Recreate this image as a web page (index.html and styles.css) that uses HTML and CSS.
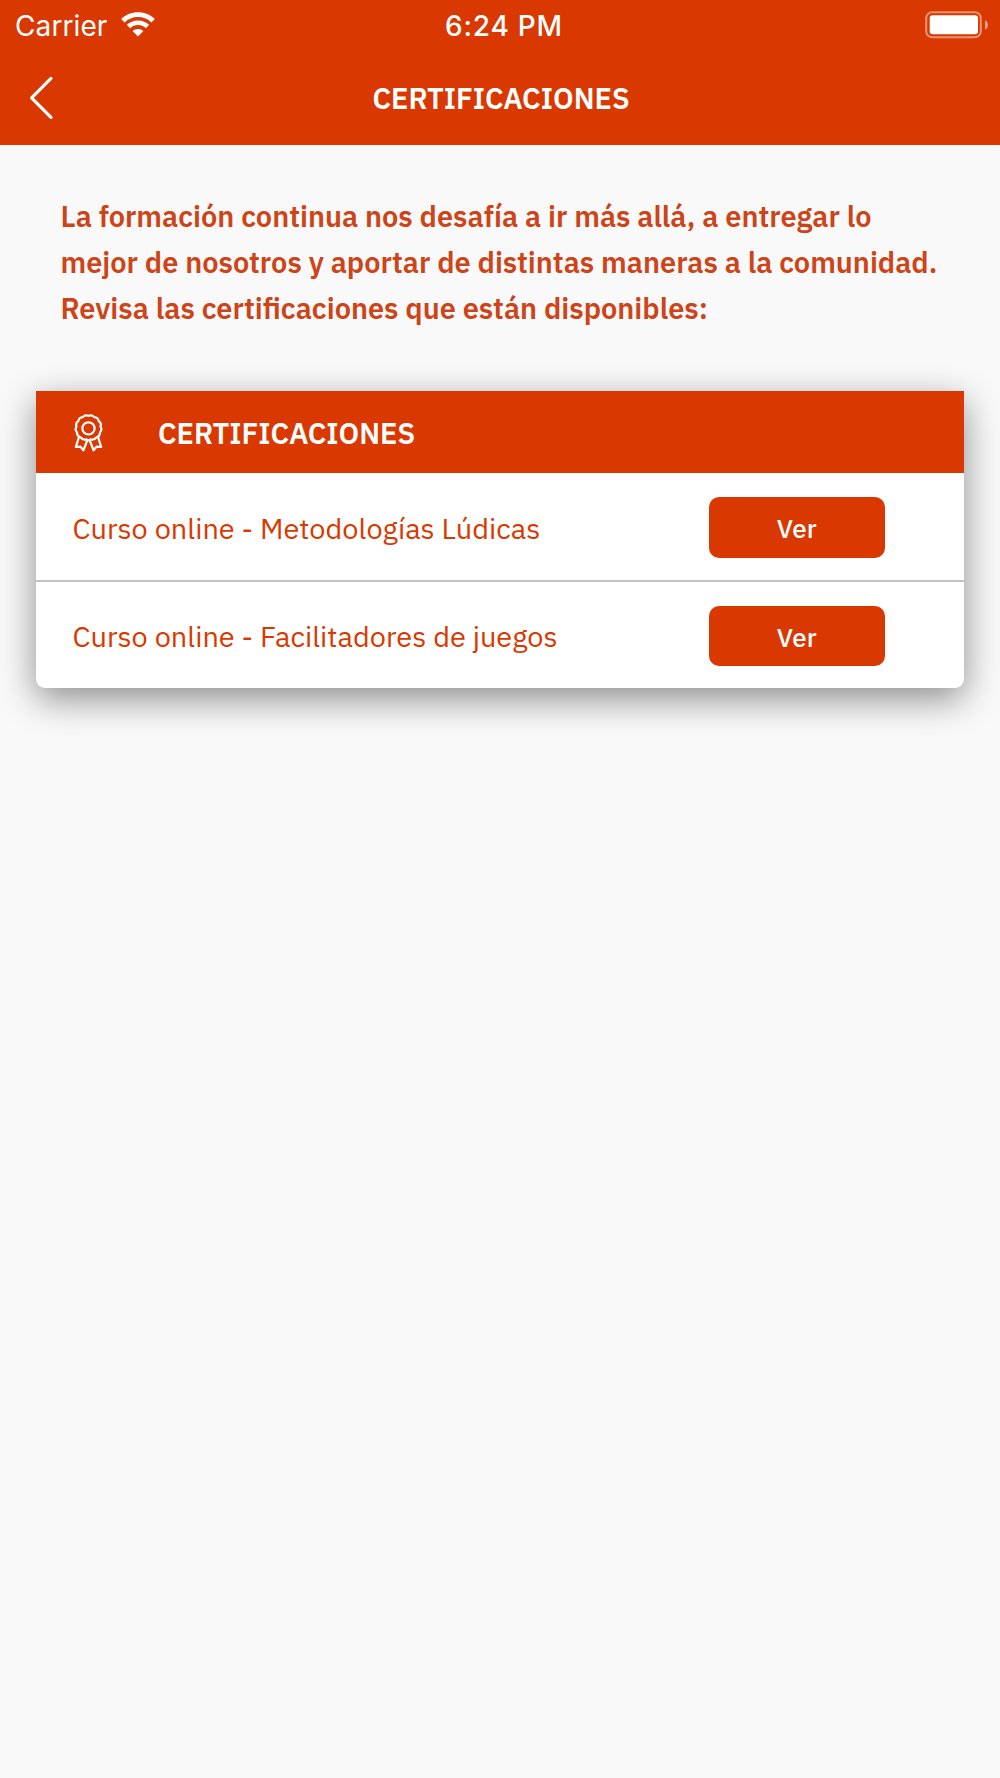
FILE: index.html
```html
<!DOCTYPE html>
<html lang="es">
  <head>
    <meta charset="UTF-8" />
    <meta name="viewport" content="width=device-width, initial-scale=1.0" />
    <title>Certificaciones</title>
    <link rel="stylesheet" href="styles.css">
  </head>
  <body>
    <header class="header">
      <div class="status-bar">
        <div class="carrier">
          <span>Carrier</span>
          <svg class="wifi" width="34" height="25" viewBox="0 0 34 25" fill="#fff">
            <path d="M17 0.3C23.7 0.3 29.6 2.8 33.8 7L30.4 10.5C26.9 7.1 22.3 5.1 17 5.1S7.1 7.1 3.6 10.5L0.2 7C4.4 2.8 10.3 0.3 17 0.3Z" />
            <path d="M17 8.4C21.4 8.4 25.3 10 28.2 12.8L24.8 16.2C22.7 14.2 20 13.1 17 13.1S11.3 14.2 9.2 16.2L5.8 12.8C8.7 10 12.6 8.4 17 8.4Z" />
            <path d="M17 17C19 17 20.9 17.7 22.4 19L17 24.4L11.6 19C13.1 17.7 15 17 17 17Z" />
          </svg>
        </div>
        <span class="time">6:24 PM</span>
        <svg class="battery" width="64" height="28" viewBox="0 0 64 28">
          <rect x="1.2" y="1.2" width="54.6" height="25" rx="6" fill="none" stroke="#fff" stroke-opacity="0.45" stroke-width="2" />
          <rect x="4.7" y="4.2" width="48.3" height="19" rx="3" fill="#fff" />
          <path d="M60 9.3C61.8 10 62.9 11.7 62.9 13.9S61.8 17.8 60 18.5Z" fill="#fff" fill-opacity="0.55" />
        </svg>
      </div>
      <div class="nav-bar">
        <svg class="back" width="26" height="46" viewBox="0 0 26 46">
          <path d="M23 3.4L3.6 22.8L23 42.4" fill="none" stroke="#fff" stroke-width="3.2" stroke-linecap="round" stroke-linejoin="round" />
        </svg>
        <h1 class="title">CERTIFICACIONES</h1>
      </div>
    </header>

    <main class="content">
      <p class="intro">
        La formación continua nos desafía a ir más allá, a entregar lo
        mejor de nosotros y aportar de distintas maneras a la comunidad.
        Revisa las certificaciones que están disponibles:
      </p>

      <section class="card">
        <div class="card-header">
          <svg class="medal" width="30" height="38" viewBox="0 0 30 38" fill="none" stroke="#fff" stroke-width="2.2" stroke-linejoin="round">
            <path d="M14.5 1.8Q18 0.4 20.2 3.1Q23.9 3.3 24.7 7Q27.8 9 26.5 12.5Q28.5 15.8 26 18.6Q25.8 22.4 22.2 23.5Q20 26.6 16.5 25.4Q14.5 27.1 12.5 25.4Q9 26.6 6.8 23.5Q3.2 22.4 3 18.6Q0.5 15.8 2.5 12.5Q1.2 9 4.3 7Q5.1 3.3 8.8 3.1Q11 0.4 14.5 1.8Z" />
            <circle cx="14.5" cy="14.4" r="6.1" />
            <path d="M5 23L1.8 33L6.4 32.6L9.4 36.3L13.4 26M24 23L27.2 33L22.6 32.6L19.6 36.3L15.6 26" />
          </svg>
          <h2 class="card-title">CERTIFICACIONES</h2>
        </div>
        <div class="row">
          <span class="course">Curso online - Metodologías Lúdicas</span>
          <button class="btn">Ver</button>
        </div>
        <div class="row">
          <span class="course">Curso online - Facilitadores de juegos</span>
          <button class="btn">Ver</button>
        </div>
      </section>
    </main>
  </body>
</html>
```
FILE: styles.css
```css
* {
  box-sizing: border-box;
}

body {
  margin: 0;
  min-height: 100vh;
  background: #f9f9f9;
  font-family: "IBM Plex Sans", "Open Sans", sans-serif;
}

.header {
  height: 145px;
  background: #d93900;
  color: #fff;
}

.status-bar {
  display: grid;
  grid-template-columns: 1fr auto 1fr;
  align-items: center;
  height: 51px;
  padding: 0 11px 0 15px;
  font-family: Inter, sans-serif;
  font-size: 28px;
}

.carrier {
  display: flex;
  align-items: center;
  gap: 13.5px;
  letter-spacing: 0.1px;
}

.wifi {
  margin-bottom: 3px;
}

.time {
  padding-left: 4px;
  font-weight: 500;
  letter-spacing: 0.8px;
}

.battery {
  justify-self: end;
  margin-bottom: 2px;
}

.nav-bar {
  display: grid;
  grid-template-columns: 1fr auto 1fr;
  align-items: center;
  height: 94px;
  padding: 0 28px;
}

.back {
  margin-bottom: 1px;
}

.title,
.card-title {
  margin: 0;
  font-size: 29px;
  font-weight: 600;
}

.title {
  grid-column: 2;
  padding-left: 2px;
}

.intro {
  margin: 0;
  padding: 48px 50px 0 60.5px;
  font-size: 28.95px;
  font-weight: 600;
  line-height: 46px;
  color: #cc4417;
}

.card {
  margin: 60px 36px 0;
  overflow: hidden;
  border-radius: 0 0 9px 9px;
  background: #fff;
  box-shadow: 0 11px 36px rgba(0, 0, 0, 0.44);
}

.card-header {
  display: flex;
  align-items: center;
  height: 82px;
  padding: 2px 0 0 38px;
  gap: 54px;
  background: #d93900;
  color: #fff;
}

.row {
  display: flex;
  align-items: center;
  justify-content: space-between;
  height: 106.5px;
  padding: 2px 79px 0 36.5px;
}

.row + .row {
  height: 108.5px;
  border-top: 2px solid #c2c2c2;
}

.course {
  padding-top: 1px;
  font-size: 28.95px;
  color: #d93900;
}

.btn {
  width: 176.5px;
  height: 60.5px;
  padding: 2px 0 0;
  border: 0;
  border-radius: 10px;
  background: #d93900;
  color: #fff;
  font-family: inherit;
  font-size: 26px;
  font-weight: 500;
}
```
